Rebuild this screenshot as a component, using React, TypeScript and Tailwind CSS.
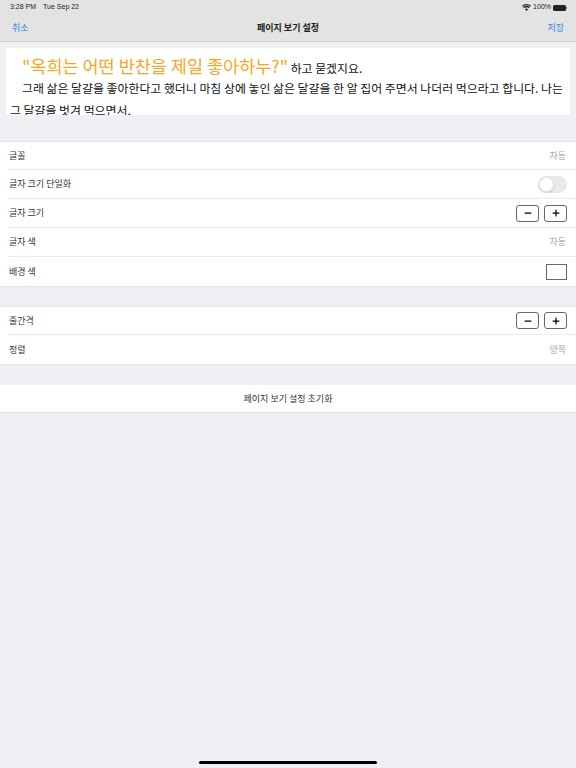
import { Minus, Plus } from "lucide-react";

const font = "font-['Noto_Sans_CJK_KR','Liberation_Sans',sans-serif]";

const Stepper = () => (
  <div className="flex gap-[5px]">
    <button className="flex h-[17px] w-[23px] items-center justify-center rounded-[3px] border border-[#666] text-black">
      <Minus size={10} strokeWidth={3} />
    </button>
    <button className="flex h-[17px] w-[23px] items-center justify-center rounded-[3px] border border-[#666] text-black">
      <Plus size={10} strokeWidth={3} />
    </button>
  </div>
);

const Row = ({ label, edge, last, children }: { label: string; edge?: boolean; last?: boolean; children?: React.ReactNode }) => (
  <div
    className={`ml-2 flex items-center justify-between pl-[1px] pr-[9px] ${edge ? "h-[28px]" : "h-[29px]"} ${
      last ? "" : "border-b border-[#ececee]"
    }`}
  >
    <span className="text-[9px] text-[#333]">{label}</span>
    {children}
  </div>
);

const Value = ({ text }: { text: string }) => <span className="mr-[1px] text-[9px] text-[#a3a3a8]">{text}</span>;

export default function App() {
  return (
    <div className={`relative flex h-[768px] w-[576px] flex-col overflow-hidden bg-[#efeff4] ${font}`}>
      <header className="h-[42px] border-b border-[#d4d4d6] bg-[#e3e3e3]">
        <div className="flex h-[14px] items-center justify-between pl-[10px] pr-[9px] pt-[1px] text-[7px] text-[#222]">
          <div className="flex gap-[7px] font-['Liberation_Sans',sans-serif]">
            <span>3:28 PM</span>
            <span>Tue Sep 22</span>
          </div>
          <div className="flex items-center gap-[2px] font-['Liberation_Sans',sans-serif]">
            <svg width="9" height="7" viewBox="0 0 18 14" fill="#222">
              <path d="M9 14 L6 10.5 A4.6 4.6 0 0 1 12 10.5 Z" />
              <path d="M4.4 8.6 L2.6 6.6 A9.6 9.6 0 0 1 15.4 6.6 L13.6 8.6 A7 7 0 0 0 4.4 8.6 Z" />
              <path d="M1.6 5.4 L0 3.6 A13.4 13.4 0 0 1 18 3.6 L16.4 5.4 A11 11 0 0 0 1.6 5.4 Z" />
            </svg>
            <span>100%</span>
            <div className="flex items-center">
              <div className="h-[6px] w-[13px] rounded-[1.5px] bg-[#222]" />
              <div className="h-[2px] w-[1px] bg-[#888]" />
            </div>
          </div>
        </div>
        <div className="flex h-[27px] items-center justify-between px-3 text-[9px]">
          <span className="text-[#2f86dc]">취소</span>
          <span className="font-bold text-[#222]">페이지 보기 설정</span>
          <span className="text-[#2f86dc]">저장</span>
        </div>
      </header>

      <section className="mx-[6px] mt-[6px] h-[67px] overflow-hidden bg-white pl-1 pr-1 text-[11.9px] text-[#111]">
        <p className="h-[29px] whitespace-nowrap pl-3 leading-[36px]">
          <span className="text-[17.5px] text-[#f5a623]">"옥희는 어떤 반찬을 제일 좋아하누?"</span> 하고 묻겠지요.
        </p>
        <p className="whitespace-nowrap pl-3 leading-[22px]">
          그래 삶은 달걀을 좋아한다고 했더니 마침 상에 놓인 삶은 달걀을 한 알 집어 주면서 나더러 먹으라고 합니다. 나는
        </p>
        <p className="whitespace-nowrap leading-[22px]">그 달걀을 벗겨 먹으면서,</p>
      </section>

      <section className="mt-[26px] border-y border-[#e6e6e8] bg-white">
        <Row label="글꼴" edge>
          <Value text="자동" />
        </Row>
        <Row label="글자 크기 단일화">
          <div className="flex h-[17px] w-[29px] items-center rounded-full bg-[#e9e9ea] p-[1px]">
            <div className="h-[15px] w-[15px] rounded-full border border-[#e4e4e4] bg-white shadow-sm" />
          </div>
        </Row>
        <Row label="글자 크기">
          <Stepper />
        </Row>
        <Row label="글자 색">
          <Value text="자동" />
        </Row>
        <Row label="배경 색" last>
          <div className="h-4 w-[21px] border border-[#666] bg-white" />
        </Row>
      </section>

      <section className="mt-[19px] border-y border-[#e6e6e8] bg-white">
        <Row label="줄간격" edge>
          <Stepper />
        </Row>
        <Row label="정렬" last>
          <Value text="양쪽" />
        </Row>
      </section>

      <section className="mt-[20px] flex h-[28px] items-center justify-center border-b border-[#e0e0e2] bg-white text-[9px] text-[#333]">
        페이지 보기 설정 초기화
      </section>

      <div className="absolute bottom-[4px] left-[199px] h-[3px] w-[178px] rounded-full bg-black" />
    </div>
  );
}
